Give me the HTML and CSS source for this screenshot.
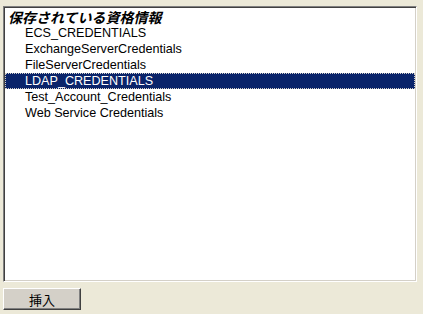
FILE: index.html
```html
<!DOCTYPE html>
<html lang="ja">
<head>
    <meta charset="UTF-8">
    <title>資格情報</title>
    <link rel="stylesheet" href="styles.css">
</head>
<body>
    <div class="panel">
        <div class="listbox">
            <div class="group">保存されている資格情報</div>
            <div class="item">ECS_CREDENTIALS</div>
            <div class="item">ExchangeServerCredentials</div>
            <div class="item">FileServerCredentials</div>
            <div class="item selected">LDAP_CREDENTIALS</div>
            <div class="item">Test_Account_Credentials</div>
            <div class="item">Web Service Credentials</div>
        </div>
        <button class="btn">挿入</button>
    </div>
</body>
</html>
```
FILE: styles.css
```css
* {
    margin: 0;
    padding: 0;
    box-sizing: border-box;
}

body {
    background: #ece9d8;
    font-family: "Liberation Sans", Arial, "Noto Sans CJK JP", sans-serif;
    font-size: 12.6px;
    color: #000;
}

.panel {
    padding: 6px 6px 0 3px;
    display: flex;
    flex-direction: column;
    align-items: flex-start;
    gap: 6px;
}

.listbox {
    width: 414px;
    height: 276px;
    background: #fff;
    border-top: 1px solid #808080;
    border-left: 1px solid #808080;
    border-right: 1px solid #fff;
    border-bottom: 1px solid #fff;
    box-shadow: inset 1px 1px 0 #404040, inset -1px -1px 0 #d4d0c8;
    padding: 2px 1px;
}

.group {
    font-family: "Noto Sans CJK JP", sans-serif;
    font-weight: bold;
    font-style: italic;
    font-size: 14px;
    line-height: 16px;
    padding-left: 3px;
}

.item {
    line-height: 16px;
    padding-left: 20px;
}

.item.selected {
    background: #0a246a;
    color: #fff;
    outline: 1px dotted #d4d0c8;
    outline-offset: -1px;
}

.btn {
    width: 78px;
    height: 22px;
    background: #d4d0c8;
    border-top: 1px solid #fff;
    border-left: 1px solid #fff;
    border-right: 1px solid #404040;
    border-bottom: 1px solid #404040;
    box-shadow: inset -1px -1px 0 #808080;
    font-family: "Noto Sans CJK JP", sans-serif;
    font-size: 13px;
    color: #000;
}
```
